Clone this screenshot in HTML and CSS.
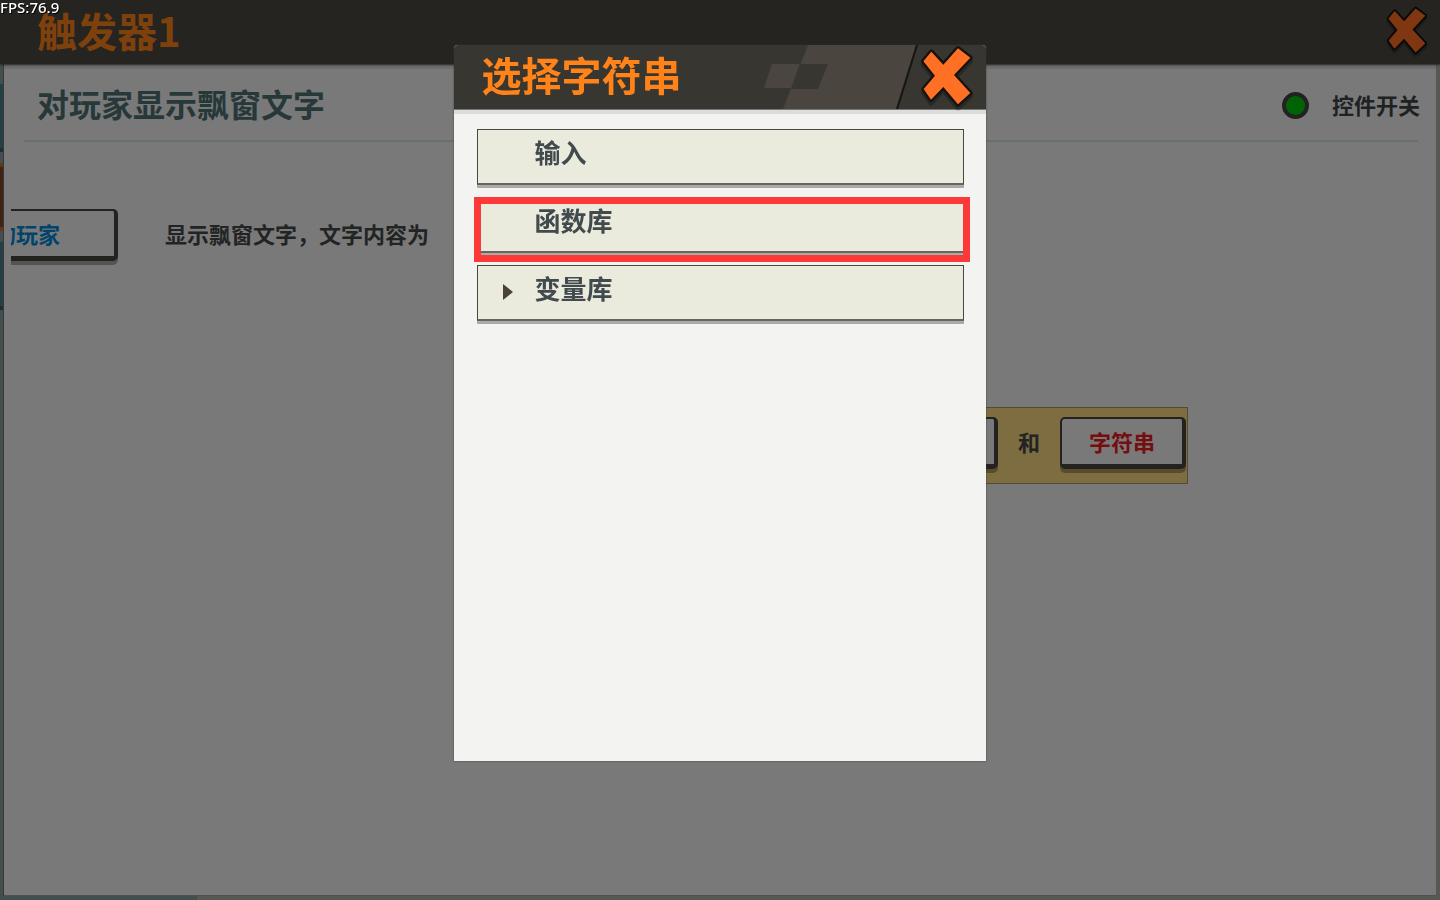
FILE: index.html
```html
<!DOCTYPE html>
<html lang="zh">
<head>
  <meta charset="UTF-8">
  <meta name="viewport" content="width=device-width, initial-scale=1.0">
  <title>触发器1 - 选择字符串</title>
  <link rel="stylesheet" href="styles.css">
</head>
<body>
  <div class="fps">FPS:76.9</div>

  <header class="topbar">
    <h1>触发器1</h1>
    <button class="close-btn" type="button" aria-label="关闭触发器">
      <svg width="44" height="52" viewBox="0 0 168 198">
        <path class="x-shadow" d="M37 33 73 72 117 23 154 51 105 103 154 157 117 191 73 139 36 177 14 145 48 105 13 62Z"/>
        <path class="x-shape" d="M37 23 73 62 117 13 154 41 105 93 154 147 117 181 73 129 36 167 14 135 48 95 13 52Z"/>
      </svg>
    </button>
  </header>

  <div class="workspace">
    <div class="side-tabs">
      <div class="tab"></div>
      <div class="tab active"></div>
      <div class="tab"></div>
    </div>
    <main class="panel">
      <div class="panel-head">
        <h2>对玩家显示飘窗文字</h2>
        <label class="toggle" for="widget-switch">
          <input type="checkbox" id="widget-switch" checked>
          <span>控件开关</span>
        </label>
      </div>
      <div class="clauses">
        <div class="clause">
          <button class="slot player" type="button">的玩家</button>
          <span class="clause-text">显示飘窗文字，文字内容为</span>
        </div>
        <div class="join">
          <button class="slot" type="button" aria-label="字符串参数"></button>
          <span class="clause-text">和</span>
          <button class="slot string" type="button">字符串</button>
        </div>
      </div>
    </main>
  </div>

  <div class="overlay">
    <section class="dialog" role="dialog" aria-labelledby="dialog-title">
      <div class="dialog-head">
        <svg class="deco" width="222" height="64" viewBox="0 0 222 64">
          <path fill="#4a463f" d="M44 0H153L133 64H19ZM8 19H36L27 43H0Z"/>
          <path fill="#383630" d="M36 19H64L54 44H27Z"/>
          <path stroke="#161510" stroke-width="2" d="M153 0 133 64"/>
        </svg>
        <h2 id="dialog-title">选择字符串</h2>
        <button class="close-btn" type="button" aria-label="关闭">
          <svg width="56" height="66" viewBox="0 0 168 198">
            <path class="x-shadow" d="M37 33 73 72 117 23 154 51 105 103 154 157 117 191 73 139 36 177 14 145 48 105 13 62Z"/>
            <path class="x-shape" d="M37 23 73 62 117 13 154 41 105 93 154 147 117 181 73 129 36 167 14 135 48 95 13 52Z"/>
          </svg>
        </button>
      </div>
      <ul class="options">
        <li><button class="option" type="button">输入</button></li>
        <li class="marked"><button class="option" type="button">函数库</button></li>
        <li><button class="option expandable" type="button">变量库</button></li>
      </ul>
    </section>
  </div>
</body>
</html>
```
FILE: styles.css
```css
* { margin: 0; padding: 0; box-sizing: border-box; }
body {
  height: 100vh;
  display: flex;
  flex-direction: column;
  overflow: hidden;
  font-family: "Noto Sans CJK SC", sans-serif;
  font-weight: 700;
  background: linear-gradient(90deg, #869c9c 197px, #aeb0a8 0);
}
button { font: inherit; cursor: pointer; }
h1, h2 { font-weight: 700; }

.fps {
  position: absolute;
  top: 0;
  left: 0;
  z-index: 20;
  font: 500 15px/15px "Noto Sans", sans-serif;
  color: #fff;
  text-shadow: 1px 1px 0 #000;
}

/* top bar */
.topbar {
  min-height: 64px;
  padding: 0 11px 0 37px;
  display: flex;
  align-items: flex-start;
  justify-content: space-between;
  background: #4a4840;
  box-shadow: 0 1px 2px #444;
  z-index: 1;
}
.topbar h1 { font-size: 40px; line-height: 60px; color: #ff8318; }
.topbar .close-btn { padding-top: 5px; }
.close-btn { background: none; border: none; display: flex; }
.close-btn svg { overflow: visible; }
.x-shape {
  fill: #ff6f24;
  stroke: #14130f;
  stroke-width: 14px;
  stroke-linejoin: round;
  paint-order: stroke;
}
.x-shadow {
  fill: none;
  stroke: #000;
  stroke-opacity: 0.25;
  stroke-width: 16px;
  stroke-linejoin: round;
}

/* workspace */
.workspace {
  flex: 1;
  min-height: 0;
  display: flex;
  padding: 0 4px 4px 0;
}
.side-tabs {
  width: 4px;
  padding-top: 20px;
  display: flex;
  flex-direction: column;
  gap: 11px;
  border-right: 1px solid #70706e;
}
.tab { height: 68px; background: #46808f; border-bottom: 4px solid #3c5f66; }
.tab.active { background: #804624; border: solid #c8702c; border-width: 4px 0; }
.panel {
  flex: 1;
  min-width: 0;
  background: #f3f3f3;
  border-bottom: 1px solid #a0a0a0;
  box-shadow: inset 0 5px 0 #dedede;
}
.panel-head {
  display: flex;
  align-items: center;
  justify-content: space-between;
  min-height: 78px;
  margin: 0 18px 0 20px;
  padding: 5px 0 0 13px;
  border-bottom: 2px solid #d0e0dd;
}
.panel-head h2 { font-size: 32px; line-height: 44px; padding-bottom: 4px; color: #4e7073; }
.toggle {
  display: flex;
  align-items: center;
  gap: 23px;
  margin-right: -2px;
  padding-top: 2px;
  font-size: 22px;
  line-height: 28px;
  color: #3f4444;
}
.toggle span { padding-bottom: 4px; }
.toggle input {
  appearance: none;
  width: 27px;
  height: 27px;
  border: 4px solid #444;
  border-radius: 50%;
  background: #888;
}
.toggle input:checked { background: #00c808; }

.clauses { margin: 0 7px; padding-top: 67px; overflow: hidden; }
.clause { display: flex; align-items: center; gap: 47px; }
.clause-text { padding-bottom: 4px; font-size: 22px; color: #444848; }
.slot {
  height: 52px;
  min-width: 118px;
  padding-bottom: 2px;
  background: #f3f3f3;
  border: solid #47453e;
  border-width: 2px 4px 5px 2px;
  border-radius: 5px;
  box-shadow: 0 4px 0 rgba(0, 0, 0, 0.3);
  font-size: 22px;
}
.slot.player { min-width: 180px; margin-left: -73px; color: #0089d8; }
.slot.string { min-width: 126px; color: #e81c20; }
.join {
  width: max-content;
  margin: 146px 0 0 calc(50% + 150px);
  padding: 9px 1px 14px 9px;
  display: flex;
  align-items: center;
  gap: 20px;
  background: #fadb82;
  border: 1px solid #a8976a;
}

/* dialog */
.overlay {
  position: fixed;
  inset: 0;
  z-index: 10;
  display: flex;
  justify-content: center;
  align-items: flex-start;
  padding-top: 5vh;
  background: rgba(0, 0, 0, 0.5);
}
.dialog {
  width: 37%;
  min-width: 360px;
  min-height: calc(80vh - 4px);
  background: #f3f3f1;
  border-radius: 4px 4px 0 0;
  box-shadow: 0 0 2px #333;
}
.dialog-head {
  position: relative;
  height: 64px;
  padding: 0 11px 0 28px;
  display: flex;
  align-items: center;
  justify-content: space-between;
  background: #383630;
  border-radius: 4px 4px 0 0;
  box-shadow: 0 1px 0 #777, 0 5px 0 #dcdcda;
}
.dialog-head h2 { font-size: 40px; line-height: 56px; padding-bottom: 6px; color: #ff8318; }
.dialog-head h2, .dialog-head .close-btn { position: relative; }
.deco { position: absolute; top: 0; right: 0; }
.options {
  list-style: none;
  display: flex;
  flex-direction: column;
  gap: 12px;
  padding: 20px 22px 20px 23px;
}
.option {
  position: relative;
  display: block;
  width: 100%;
  height: 56px;
  padding: 0 0 9px 57px;
  text-align: left;
  font-size: 26px;
  line-height: 36px;
  color: #414b4d;
  background: #ebebdd;
  border: 1px solid #444a40;
  border-bottom: 2px solid #66665f;
  box-shadow: 0 3px 0 #aaa;
}
.option:hover { background: #f2f2e6; }
.expandable::before {
  content: "";
  position: absolute;
  left: 25px;
  top: 18px;
  border: solid transparent;
  border-width: 8px 0 8px 10px;
  border-left-color: #484238;
}
.marked { position: relative; }
.marked::after {
  content: "";
  position: absolute;
  inset: 0 -6px -9px -3px;
  border: 7px solid #fc3838;
  pointer-events: none;
}
```
